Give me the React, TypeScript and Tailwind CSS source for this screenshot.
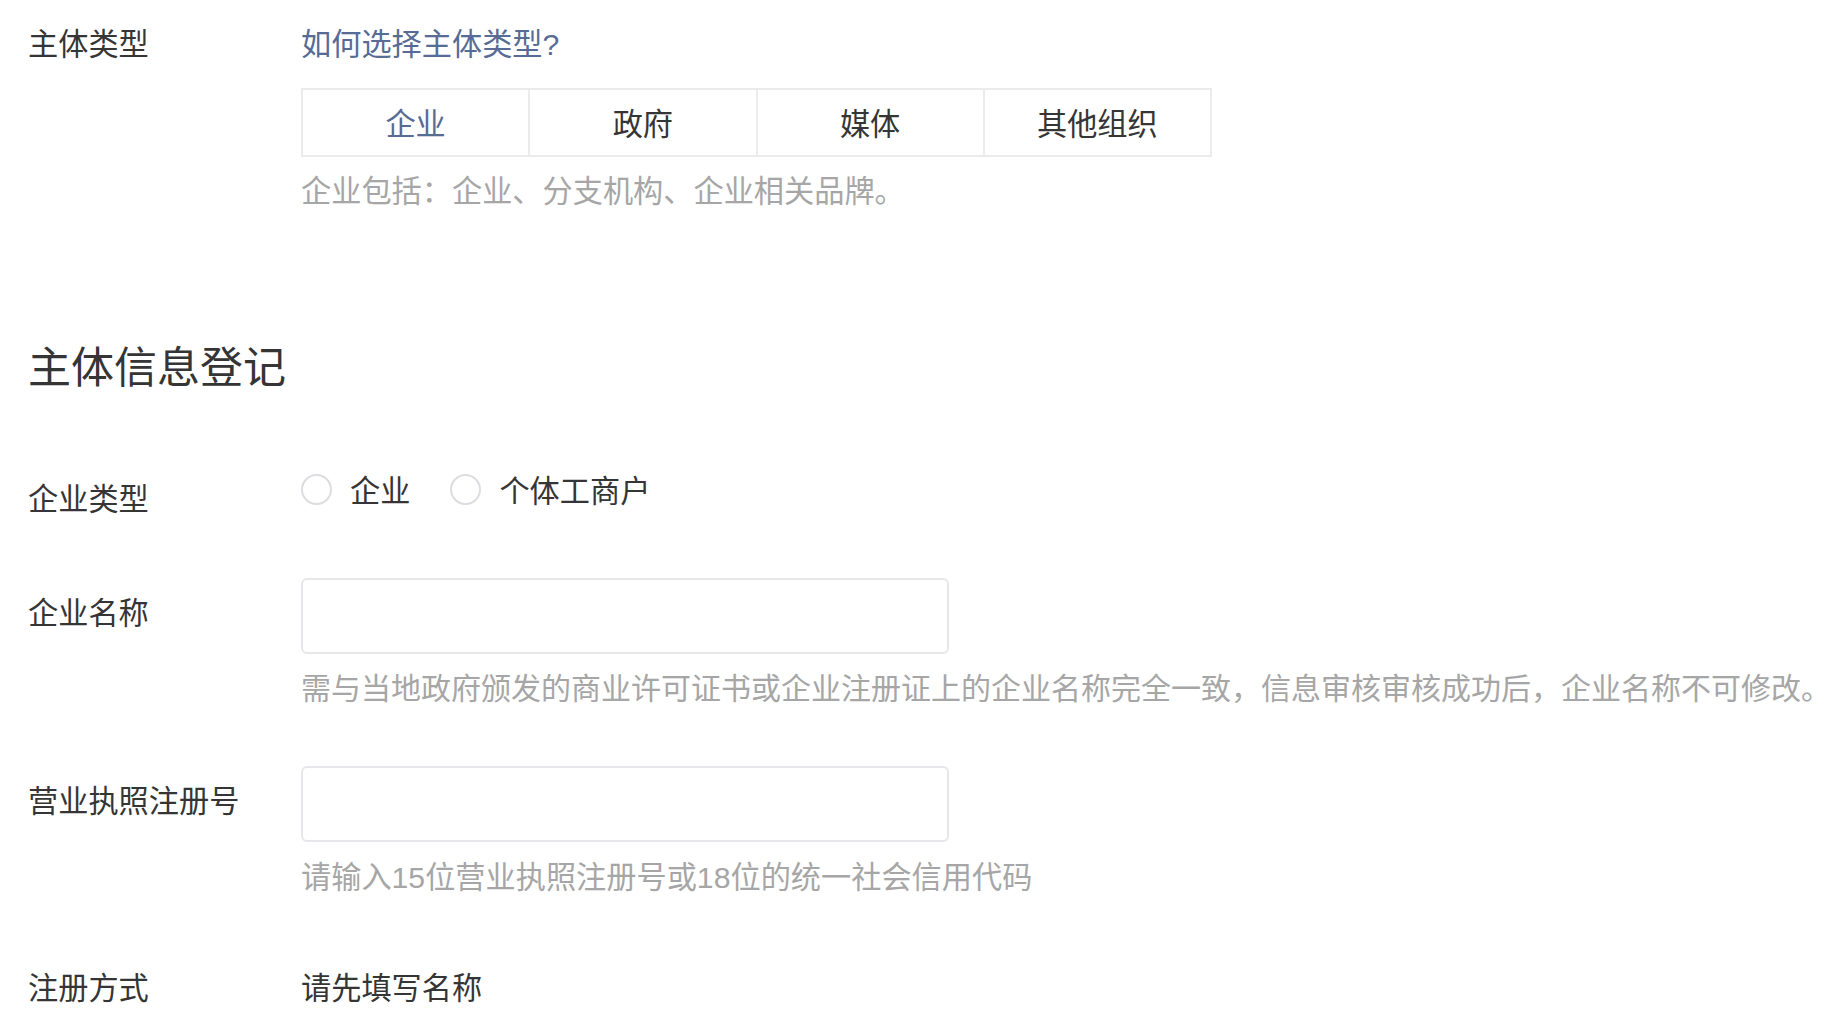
import React from "react";

const labelCls = "w-[273px] shrink-0 leading-[42px] text-[#353535]";
const latin = "font-['Liberation_Sans',sans-serif] leading-none";

function Radio({ label }: { label: string }) {
  return (
    <label className="flex items-center">
      <span className="h-[31px] w-[31px] rounded-full border-2 border-[#dcdde0] bg-white" />
      <span className="ml-[18px] leading-[42px] text-[#353535]">{label}</span>
    </label>
  );
}

export default function App() {
  const segments = ["企业", "政府", "媒体", "其他组织"];
  return (
    <div className="h-screen w-full overflow-hidden bg-white pl-[28px] pt-[21px] font-['Noto_Sans_CJK_SC','Noto_Sans',sans-serif] text-[30.2px]">
      {/* 主体类型 */}
      <div className="flex items-start">
        <div className={labelCls}>主体类型</div>
        <div className="flex flex-col">
          <a className="leading-[42px] text-[#576b95]">
            如何选择主体类型<span className={latin}>?</span>
          </a>
          <div className="mt-[25px] flex h-[69px] w-[911px] border-2 border-[#ebebeb]">
            {segments.map((s, i) => (
              <div
                key={s}
                className={
                  i === 0
                    ? "flex flex-1 items-center justify-center text-[#576b95]"
                    : "flex flex-1 items-center justify-center border-l-2 border-[#ebebeb] text-[#353535]"
                }
              >
                {s}
              </div>
            ))}
          </div>
          <p className="mt-[11px] leading-[42px] text-[#a6a6a6]">企业包括：企业、分支机构、企业相关品牌。</p>
        </div>
      </div>

      {/* 主体信息登记 */}
      <h2 className="mt-[124px] text-[43px] leading-[60px] text-[#353535]">主体信息登记</h2>

      {/* 企业类型 */}
      <div className="mt-[74px] flex items-start">
        <div className={labelCls + " pt-[8px]"}>企业类型</div>
        <div className="flex items-center gap-[40px]">
          <Radio label="企业" />
          <Radio label="个体工商户" />
        </div>
      </div>

      {/* 企业名称 */}
      <div className="mt-[60px] flex items-start">
        <div className={labelCls + " pt-[12px]"}>企业名称</div>
        <div className="flex flex-col">
          <input className="h-[76px] w-[648px] rounded-[6px] border-2 border-[#e6e7eb] bg-white px-4 outline-none" />
          <p className="mt-[11px] whitespace-nowrap text-[30px] leading-[42px] text-[#a6a6a6]">
            需与当地政府颁发的商业许可证书或企业注册证上的企业名称完全一致，信息审核审核成功后，企业名称不可修改。
          </p>
        </div>
      </div>

      {/* 营业执照注册号 */}
      <div className="mt-[59px] flex items-start">
        <div className={labelCls + " pt-[12px]"}>营业执照注册号</div>
        <div className="flex flex-col">
          <input className="h-[76px] w-[648px] rounded-[6px] border-2 border-[#e6e7eb] bg-white px-4 outline-none" />
          <p className="mt-[12px] whitespace-nowrap leading-[42px] text-[#a6a6a6]">
            请输入<span className={latin}>15</span>位营业执照注册号或<span className={latin}>18</span>位的统一社会信用代码
          </p>
        </div>
      </div>

      {/* 注册方式 */}
      <div className="mt-[69px] flex items-start">
        <div className={labelCls}>注册方式</div>
        <div className="leading-[42px] text-[#353535]">请先填写名称</div>
      </div>
    </div>
  );
}
